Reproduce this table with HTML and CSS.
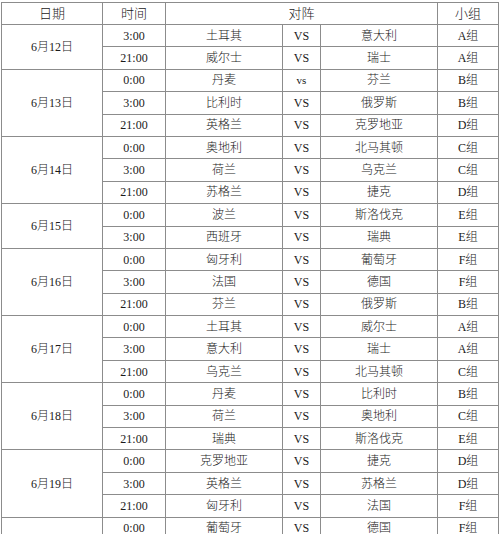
FILE: index.html
```html
<!DOCTYPE html>
<html lang="zh-CN">
<head>
<meta charset="utf-8">
<title>赛程表</title>
<link rel="stylesheet" href="styles.css">
</head>
<body>
<table class="schedule">
  <colgroup>
    <col class="c-date"><col class="c-time"><col class="c-team"><col class="c-vs"><col class="c-team"><col class="c-group">
  </colgroup>
  <thead>
    <tr class="head"><th>日期</th><th>时间</th><th colspan="3">对阵</th><th>小组</th></tr>
  </thead>
  <tbody>
    <tr><td rowspan="2">6月12日</td><td>3:00</td><td>土耳其</td><td>VS</td><td>意大利</td><td>A组</td></tr>
    <tr><td>21:00</td><td>威尔士</td><td>VS</td><td>瑞士</td><td>A组</td></tr>

    <tr><td rowspan="3">6月13日</td><td>0:00</td><td>丹麦</td><td class="lower">vs</td><td>芬兰</td><td>B组</td></tr>
    <tr><td>3:00</td><td>比利时</td><td>VS</td><td>俄罗斯</td><td>B组</td></tr>
    <tr><td>21:00</td><td>英格兰</td><td>VS</td><td>克罗地亚</td><td>D组</td></tr>

    <tr><td rowspan="3">6月14日</td><td>0:00</td><td>奥地利</td><td>VS</td><td>北马其顿</td><td>C组</td></tr>
    <tr><td>3:00</td><td>荷兰</td><td>VS</td><td>乌克兰</td><td>C组</td></tr>
    <tr><td>21:00</td><td>苏格兰</td><td>VS</td><td>捷克</td><td>D组</td></tr>

    <tr><td rowspan="2">6月15日</td><td>0:00</td><td>波兰</td><td>VS</td><td>斯洛伐克</td><td>E组</td></tr>
    <tr><td>3:00</td><td>西班牙</td><td>VS</td><td>瑞典</td><td>E组</td></tr>

    <tr><td rowspan="3">6月16日</td><td>0:00</td><td>匈牙利</td><td>VS</td><td>葡萄牙</td><td>F组</td></tr>
    <tr><td>3:00</td><td>法国</td><td>VS</td><td>德国</td><td>F组</td></tr>
    <tr><td>21:00</td><td>芬兰</td><td>VS</td><td>俄罗斯</td><td>B组</td></tr>

    <tr><td rowspan="3">6月17日</td><td>0:00</td><td>土耳其</td><td>VS</td><td>威尔士</td><td>A组</td></tr>
    <tr><td>3:00</td><td>意大利</td><td>VS</td><td>瑞士</td><td>A组</td></tr>
    <tr><td>21:00</td><td>乌克兰</td><td>VS</td><td>北马其顿</td><td>C组</td></tr>

    <tr><td rowspan="3">6月18日</td><td>0:00</td><td>丹麦</td><td>VS</td><td>比利时</td><td>B组</td></tr>
    <tr><td>3:00</td><td>荷兰</td><td>VS</td><td>奥地利</td><td>C组</td></tr>
    <tr><td>21:00</td><td>瑞典</td><td>VS</td><td>斯洛伐克</td><td>E组</td></tr>

    <tr><td rowspan="3">6月19日</td><td>0:00</td><td>克罗地亚</td><td>VS</td><td>捷克</td><td>D组</td></tr>
    <tr><td>3:00</td><td>英格兰</td><td>VS</td><td>苏格兰</td><td>D组</td></tr>
    <tr><td>21:00</td><td>匈牙利</td><td>VS</td><td>法国</td><td>F组</td></tr>

    <tr><td rowspan="3">6月20日</td><td>0:00</td><td>葡萄牙</td><td>VS</td><td>德国</td><td>F组</td></tr>
    <tr><td>3:00</td><td>西班牙</td><td>VS</td><td>波兰</td><td>E组</td></tr>
    <tr><td>21:00</td><td>意大利</td><td>VS</td><td>威尔士</td><td>A组</td></tr>
  </tbody>
</table>
</body>
</html>
```
FILE: styles.css
```css
html {
  overflow: hidden;
  background: #fff;
}
body {
  margin: 2px 0 0 1px;
  font-family: "Liberation Serif", "Noto Sans CJK SC", serif;
  font-size: 12px;
  font-weight: 300;
  color: #1a1a1a;
}
.schedule {
  border-collapse: collapse;
  table-layout: fixed;
  width: 497px;
}
.c-date { width: 101px; }
.c-time { width: 63px; }
.c-team { width: 117px; }
.c-vs { width: 38px; }
.c-group { width: 61px; }
.schedule th,
.schedule td {
  border: 1px solid #8c8c8c;
  padding: 0;
  text-align: center;
  vertical-align: middle;
  font-weight: 300;
  line-height: 14px;
  white-space: nowrap;
}
.schedule tr.head { height: 22px; }
.schedule tbody tr { height: 22.4px; }
.schedule th { font-size: 13px; }
.lower { font-size: 11px; }
```
